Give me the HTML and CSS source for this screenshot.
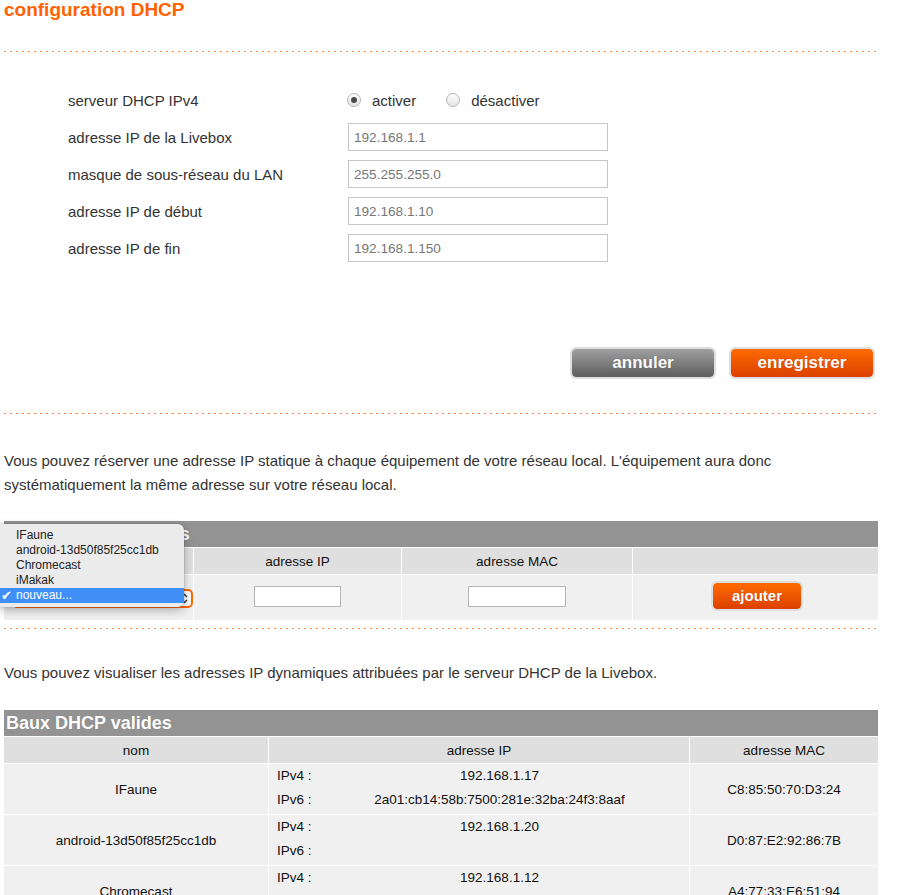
FILE: index.html
```html
<!DOCTYPE html>
<html lang="fr">
<head>
<meta charset="utf-8">
<title>configuration DHCP</title>
<link rel="stylesheet" href="styles.css">
</head>
<body>
<div class="page">
  <h1 class="title">configuration DHCP</h1>
  <div class="dots dots-top"></div>

  <div class="form">
    <div class="row">
      <span class="label">serveur DHCP IPv4</span>
      <div class="radios">
        <span class="radio checked"></span><span class="radio-text">activer</span>
        <span class="radio"></span><span class="radio-text">désactiver</span>
      </div>
    </div>
    <div class="row"><span class="label">adresse IP de la Livebox</span><span class="field">192.168.1.1</span></div>
    <div class="row"><span class="label">masque de sous-réseau du LAN</span><span class="field">255.255.255.0</span></div>
    <div class="row"><span class="label">adresse IP de début</span><span class="field">192.168.1.10</span></div>
    <div class="row"><span class="label">adresse IP de fin</span><span class="field">192.168.1.150</span></div>
  </div>

  <div class="actions">
    <span class="btn btn-grey">annuler</span>
    <span class="btn btn-orange">enregistrer</span>
  </div>

  <div class="dots dots-mid"></div>

  <p class="text text-first">Vous pouvez réserver une adresse IP statique à chaque équipement de votre réseau local. L'équipement aura donc systématiquement la même adresse sur votre réseau local.</p>

  <section class="section section-static">
    <div class="bar">Baux DHCP statiques</div>
    <table class="grid grid-static">
      <colgroup><col class="c1"><col class="c2"><col class="c3"><col class="c4"></colgroup>
      <tr class="head"><th></th><th>adresse IP</th><th>adresse MAC</th><th></th></tr>
      <tr class="inrow">
        <td><div class="select"><span>nouveau...</span><svg class="updown" width="7" height="11" viewBox="0 0 7 11"><path d="M1 4 L3.5 1.5 L6 4 M1 7 L3.5 9.5 L6 7" fill="none" stroke="#333" stroke-width="1.3"/></svg></div></td>
        <td><span class="tinput"></span></td>
        <td><span class="tinput mac"></span></td>
        <td><span class="btn btn-orange btn-small">ajouter</span></td>
      </tr>
    </table>
    <div class="menu">
      <ul>
        <li>IFaune</li>
        <li>android-13d50f85f25cc1db</li>
        <li>Chromecast</li>
        <li>iMakak</li>
        <li class="sel"><span class="check">✔</span>nouveau...</li>
      </ul>
    </div>
  </section>

  <div class="dots dots-low"></div>

  <p class="text text-second">Vous pouvez visualiser les adresses IP dynamiques attribuées par le serveur DHCP de la Livebox.</p>

  <section class="section section-leases">
    <div class="bar">Baux DHCP valides</div>
    <table class="grid grid-leases">
      <colgroup><col class="d1"><col class="d2"><col class="d3"></colgroup>
      <tr class="head"><th>nom</th><th>adresse IP</th><th>adresse MAC</th></tr>
      <tr class="lease">
        <td>IFaune</td>
        <td class="ipcell"><div class="ip"><span>IPv4 :</span><span class="v">192.168.1.17</span><span>IPv6 :</span><span class="v">2a01:cb14:58b:7500:281e:32ba:24f3:8aaf</span></div></td>
        <td>C8:85:50:70:D3:24</td>
      </tr>
      <tr class="lease">
        <td>android-13d50f85f25cc1db</td>
        <td class="ipcell"><div class="ip"><span>IPv4 :</span><span class="v">192.168.1.20</span><span>IPv6 :</span><span class="v"></span></div></td>
        <td>D0:87:E2:92:86:7B</td>
      </tr>
      <tr class="lease">
        <td>Chromecast</td>
        <td class="ipcell"><div class="ip"><span>IPv4 :</span><span class="v">192.168.1.12</span><span>IPv6 :</span><span class="v"></span></div></td>
        <td>A4:77:33:E6:51:94</td>
      </tr>
    </table>
  </section>
</div>
</body>
</html>
```
FILE: styles.css
```css
* { box-sizing: border-box; }
html, body { margin: 0; padding: 0; background: #fff; }
body { font-family: "Liberation Sans", Arial, sans-serif; color: #333; }

.page { width: 874px; margin-left: 4px; }

.title {
  margin: 0;
  font-size: 19px;
  line-height: 20px;
  font-weight: bold;
  color: #ff6200;
}

.dots {
  height: 1px;
  background-image: linear-gradient(to right, #f98a3c 0, #f98a3c 2px, transparent 2px);
  background-size: 6px 1px;
  background-repeat: repeat-x;
}
.dots-top { margin-top: 31px; }
.dots-mid { margin-top: 34px; }
.dots-low { margin-top: 7px; }

.form {
  margin: 34px 0 0 64px;
  display: flex;
  flex-direction: column;
  gap: 9px;
}
.row { display: flex; align-items: center; height: 28px; }
.label { width: 280px; font-size: 15px; color: #333; }
.radios { display: flex; align-items: center; font-size: 15px; color: #333; }
.radio {
  width: 14px; height: 14px;
  border-radius: 50%;
  border: 1px solid #b4b4b4;
  background: linear-gradient(#fdfdfd, #e4e4e4);
  margin-left: -1px;
  display: flex; align-items: center; justify-content: center;
}
.radio.checked::after {
  content: "";
  width: 6px; height: 6px;
  border-radius: 50%;
  background: #4a4a4a;
}
.radio-text { margin-left: 11px; margin-right: 31px; }
.field {
  width: 260px; height: 28px;
  border: 1px solid #c6c6c6;
  padding-left: 5px;
  font-size: 13.6px;
  color: #777;
  display: flex; align-items: center;
}

.actions {
  margin-top: 85px;
  display: flex;
  justify-content: flex-end;
  gap: 13px;
  padding-right: 3px;
}
.btn {
  display: flex; align-items: center; justify-content: center;
  width: 146px; height: 32px;
  border: 2px solid #dedede;
  border-radius: 6px;
  background-clip: padding-box;
  color: #fff;
  font-weight: bold;
  font-size: 17px;
  text-shadow: 0 0 1px rgba(0,0,0,0.3);
}
.btn-grey { background-image: linear-gradient(#a0a0a0, #5d5d5d); }
.btn-orange { background-image: linear-gradient(#ff6b00, #db4000); }
.btn-small {
  display: inline-flex;
  width: 92px; height: 30px;
  font-size: 15px;
  margin-left: 3px;
  margin-top: -4px;
  vertical-align: middle;
}

.text { margin: 0; font-size: 15px; line-height: 24px; color: #333; }
.text-first { margin-top: 35px; }
.text-second { margin-top: 32px; }

.section { position: relative; }
.section-static { margin-top: 24px; }
.section-leases { margin-top: 25px; }

.bar {
  height: 26px;
  background: #939393;
  color: #fff;
  font-weight: bold;
  font-size: 18px;
  line-height: 26px;
  padding-left: 2px;
  text-shadow: 0 0 1px rgba(0,0,0,0.2);
}

.grid {
  width: calc(100% + 2px);
  margin-left: -1px;
  border-collapse: separate;
  border-spacing: 1px;
  table-layout: fixed;
  font-size: 13.5px;
  color: #111;
}
.grid th {
  background: #dfdfdf;
  font-weight: normal;
  height: 26px;
  text-align: center;
  padding: 0;
}
.grid td { background: #f0f0f0; text-align: center; padding: 0; }

.c1 { width: 189px; } .c2 { width: 207px; } .c3 { width: 230px; } .c4 { width: 245px; }
.d1 { width: 264px; } .d2 { width: 420px; } .d3 { width: 188px; }

.inrow td { height: 45px; }
.select {
  display: flex; align-items: center; justify-content: space-between;
  width: 181px; height: 19px;
  margin-left: 8px; margin-top: 1px;
  border: 2px solid #ff6600;
  border-radius: 5px;
  background: #fff;
  font-size: 12px;
  padding: 0 3px 0 8px;
  text-align: left;
}
.tinput {
  display: inline-block;
  width: 87px; height: 21px;
  border: 1px solid #b5b5b5;
  background: #fff;
  vertical-align: middle;
  margin-top: -3px;
}
.tinput.mac { width: 98px; }

.menu {
  position: absolute;
  left: -4px; top: 3px;
  width: 184px;
  padding: 4px 0;
  background: #ecebeb;
  border-radius: 0 6px 6px 0;
  box-shadow: 0 3px 10px rgba(0,0,0,0.3), 0 0 0 0.5px rgba(0,0,0,0.12);
  font-size: 12px;
  color: #222;
  z-index: 2;
}
.menu ul { margin: 0; padding: 0; list-style: none; }
.menu li { height: 15px; line-height: 15px; padding-left: 16px; position: relative; }
.menu li.sel { background: #3f8ff6; color: #fff; }
.check {
  position: absolute;
  left: 1px; top: 0;
  font-family: "DejaVu Sans", sans-serif;
  font-size: 13px;
  line-height: 15px;
  color: #fff;
}

.lease td { height: 50px; }
.ipcell { padding: 0 8px !important; vertical-align: top; }
.ip {
  display: grid;
  grid-template-columns: 41px 1fr;
  grid-template-rows: 23px 25px;
  align-items: center;
  text-align: left;
}
.ip .v { text-align: center; }
```
